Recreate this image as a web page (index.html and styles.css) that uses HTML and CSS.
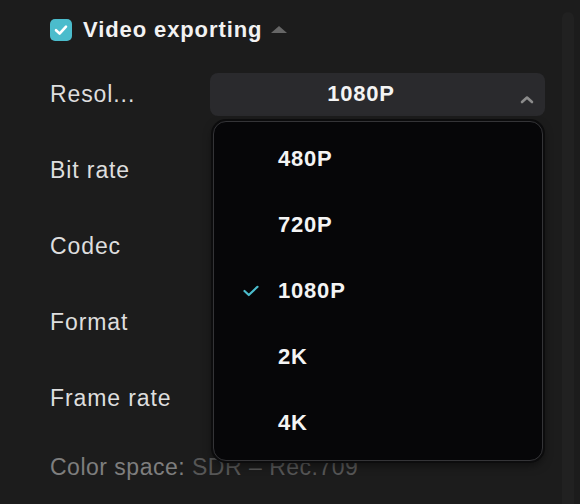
FILE: index.html
```html
<!DOCTYPE html>
<html>
<head>
<meta charset="utf-8">
<link rel="stylesheet" href="styles.css">
</head>
<body>
<div class="panel">
  <div class="header">
    <span class="checkbox">
      <svg width="22" height="22" viewBox="0 0 22 22"><path d="M6 11.2 L9.6 14.6 L16 7.6" fill="none" stroke="#fff" stroke-width="2.6" stroke-linecap="round" stroke-linejoin="round"/></svg>
    </span>
    <span class="title">Video exporting</span>
    <span class="caret"></span>
  </div>
  <div class="rows">
    <div class="row">
      <span class="label">Resol...</span>
      <div class="select">
        <span class="select-value">1080P</span>
        <svg class="chevron" width="14" height="9" viewBox="0 0 14 9"><path d="M2 7 L7 2.5 L12 7" fill="none" stroke="#8c8c8c" stroke-width="2.6" stroke-linecap="round" stroke-linejoin="round"/></svg>
        <div class="menu">
          <div class="item"><span class="check"></span><span>480P</span></div>
          <div class="item"><span class="check"></span><span>720P</span></div>
          <div class="item"><span class="check"><svg width="16" height="12" viewBox="0 0 16 12"><path d="M1.5 6 L5.8 10 L14.5 1.8" fill="none" stroke="#4bbccc" stroke-width="2.2" stroke-linecap="round" stroke-linejoin="round"/></svg></span><span>1080P</span></div>
          <div class="item"><span class="check"></span><span>2K</span></div>
          <div class="item"><span class="check"></span><span>4K</span></div>
        </div>
      </div>
    </div>
    <div class="row"><span class="label">Bit rate</span></div>
    <div class="row"><span class="label">Codec</span></div>
    <div class="row"><span class="label">Format</span></div>
    <div class="row"><span class="label">Frame rate</span></div>
    <div class="row row-info"><span class="info-key">Color space: </span><span class="info-val">SDR – Rec.709</span></div>
  </div>
  <div class="scrollbar"></div>
</div>
</body>
</html>
```

FILE: styles.css
```css
html, body {
  margin: 0;
  padding: 0;
  background: #1c1c1c;
  font-family: "Liberation Sans", Arial, sans-serif;
}

.panel {
  position: relative;
  width: 580px;
  height: 504px;
  overflow: hidden;
  box-sizing: border-box;
  padding: 19px 0 0 50px;
  background: #1c1c1c;
}

.header {
  display: flex;
  align-items: center;
  height: 22px;
}

.checkbox {
  width: 22px;
  height: 22px;
  border-radius: 5px;
  background: #4bbccc;
  display: flex;
}

.title {
  margin-left: 11px;
  color: #f2f2f2;
  font-weight: bold;
  font-size: 22px;
  letter-spacing: 0.9px;
}

.caret {
  margin-left: 9px;
  margin-top: -2px;
  width: 0;
  height: 0;
  border-left: 8px solid transparent;
  border-right: 8px solid transparent;
  border-bottom: 7px solid #666;
}

.rows {
  margin-top: 31px;
  display: flex;
  flex-direction: column;
  gap: 32px;
}

.row {
  display: flex;
  align-items: center;
  height: 44px;
}

.label {
  width: 160px;
  color: #dedede;
  font-size: 23px;
  letter-spacing: 0.9px;
}

.select {
  position: relative;
  width: 335px;
  height: 43px;
  border-radius: 8px;
  background: #2a2a2d;
  display: flex;
  align-items: center;
  justify-content: center;
  padding-right: 33px;
  box-sizing: border-box;
}

.select-value {
  color: #f4f4f4;
  font-weight: bold;
  font-size: 22px;
  letter-spacing: 0.8px;
}

.chevron {
  position: absolute;
  right: 11px;
  top: 22px;
}

.menu {
  position: absolute;
  left: 3px;
  top: 48px;
  width: 330px;
  height: 340px;
  box-sizing: border-box;
  padding: 4px 0;
  border-radius: 13px;
  background: #060608;
  border: 1px solid #343437;
  box-shadow: 0 0 0 2px #0c0c0d, 0 4px 10px rgba(0,0,0,0.5);
  z-index: 5;
}

.item {
  height: 66px;
  display: flex;
  align-items: center;
  color: #f4f4f4;
  font-weight: bold;
  font-size: 22px;
  letter-spacing: 0.8px;
}

.check {
  width: 64px;
  display: flex;
  justify-content: flex-start;
  padding-left: 29px;
  box-sizing: border-box;
}

.row-info {
  height: 30px;
  font-size: 23px;
  letter-spacing: 0.5px;
}

.info-key {
  color: #7e7e7e;
  white-space: pre;
}

.info-val {
  color: #565656;
}

.scrollbar {
  position: absolute;
  right: 6px;
  top: 12px;
  bottom: -10px;
  width: 12px;
  border-radius: 6px;
  background: #212121;
}
```
